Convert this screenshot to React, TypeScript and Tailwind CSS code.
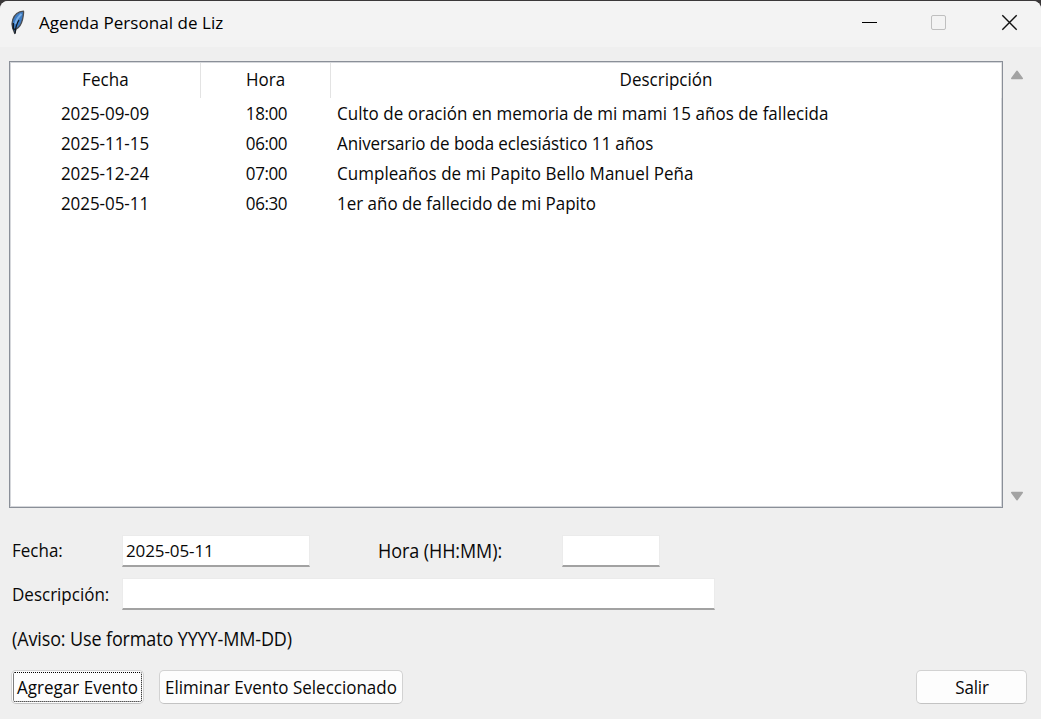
import type { ReactNode } from "react";

type Evento = { fecha: string; hora: string; descripcion: string; tracking: string };

const eventos: Evento[] = [
  {
    fecha: "2025-09-09",
    hora: "18:00",
    descripcion: "Culto de oración en memoria de mi mami 15 años de fallecida",
    tracking: "tracking-[0.02px]",
  },
  {
    fecha: "2025-11-15",
    hora: "06:00",
    descripcion: "Aniversario de boda eclesiástico 11 años",
    tracking: "tracking-[-0.09px]",
  },
  {
    fecha: "2025-12-24",
    hora: "07:00",
    descripcion: "Cumpleaños de mi Papito Bello Manuel Peña",
    tracking: "tracking-[0.04px]",
  },
  {
    fecha: "2025-05-11",
    hora: "06:30",
    descripcion: "1er año de fallecido de mi Papito",
    tracking: "tracking-[-0.02px]",
  },
];

function Label({ children, className = "" }: { children: ReactNode; className?: string }) {
  return <span className={`inline-block scale-y-[1.06] whitespace-nowrap ${className}`}>{children}</span>;
}

function Feather() {
  return (
    <svg viewBox="0 0 16 26" className="h-[26px] w-4">
      <path
        d="M14.500 2.200C10 2.500 5.500 5.500 3.800 10.500C2.900 13 2.800 16.500 3.800 19.500L5.800 24.500L7 20.200C10.500 18.500 12.500 14.500 13.500 10.500C14.300 7 14.800 4.500 14.500 2.200Z"
        fill="#3d7cc4"
        stroke="#4a4d52"
        strokeWidth="1.3"
        strokeLinejoin="round"
      />
      <path d="M12.500 5C9.500 7.500 7.300 11 6.300 15" stroke="#79aee6" strokeWidth="2" fill="none" />
      <path d="M10 11C8 14 6.600 18 6 24.500" stroke="#101820" strokeWidth="1.300" fill="none" />
      <path d="M4.300 14V19L5.500 21" stroke="#101820" strokeWidth="1.500" fill="none" />
    </svg>
  );
}

function TitleBar() {
  return (
    <header className="flex h-[46px] shrink-0 items-center rounded-t-lg bg-[#f3f3f3] pl-[9px]">
      <div className="flex h-full items-start pt-[8px]">
        <Feather />
      </div>
      <span className="mb-[2px] ml-[14px] flex-1 tracking-[0.04px] text-black">Agenda Personal de Liz</span>
      <div className="flex h-[43px] items-center self-start pr-[23px]">
        <button aria-label="Minimizar">
          <svg viewBox="0 0 17 17" className="size-[17px]">
            <path d="M1 8.500H16" stroke="#000" strokeWidth="1" />
          </svg>
        </button>
        <button aria-label="Maximizar" className="ml-[52px]" disabled>
          <svg viewBox="0 0 17 17" className="size-[17px]">
            <rect x="1.500" y="1.500" width="14" height="14" rx="1.500" fill="none" stroke="#bfbfbf" />
          </svg>
        </button>
        <button aria-label="Cerrar" className="ml-[54px]">
          <svg viewBox="0 0 17 17" className="size-[17px]">
            <path d="M1.300 1.300L15.700 15.700M15.700 1.300L1.300 15.700" stroke="#111" strokeWidth="1.400" />
          </svg>
        </button>
      </div>
    </header>
  );
}

function Arrow({ down = false }: { down?: boolean }) {
  return (
    <svg viewBox="0 0 14 10" className={`h-[10px] w-[14px] ${down ? "rotate-180" : ""}`}>
      <path d="M7 1.200L12.300 8.500H1.700Z" fill="#a3a3a3" stroke="#a3a3a3" strokeWidth="1.400" strokeLinejoin="round" />
    </svg>
  );
}

function Tabla() {
  return (
    <div className="flex h-[447px] shrink-0">
      <div className="w-[994px] border border-[#8a8f98] bg-white shadow-[inset_0_0_0_1px_#d5d7db]">
        <div className="flex h-[36px] pt-px text-center leading-[34px]">
          <div className="w-[191px] border-r border-[#e3e3e3] pl-px">
            <Label className="tracking-[0.1px]">Fecha</Label>
          </div>
          <div className="w-[130px] border-r border-[#e3e3e3]">
            <Label>Hora</Label>
          </div>
          <div className="flex-1 border-r border-[#e3e3e3]">
            <Label>Descripción</Label>
          </div>
        </div>
        {eventos.map((e) => (
          <div key={e.fecha} className="flex h-[30px] items-center pt-px text-center">
            <div className="w-[190px]">
              <Label className="tracking-[-0.06px]">{e.fecha}</Label>
            </div>
            <div className="w-[132px] pl-px">
              <Label className="tracking-[-0.4px]">{e.hora}</Label>
            </div>
            <div className="flex-1 pl-[5px] text-left">
              <Label className={e.tracking}>{e.descripcion}</Label>
            </div>
          </div>
        ))}
      </div>
      <div className="flex flex-1 flex-col items-center justify-between pt-[9px] pr-[11px] pb-[7px]">
        <Arrow />
        <Arrow down />
      </div>
    </div>
  );
}

function Campo({ className, value = "", label }: { className: string; value?: string; label: string }) {
  return (
    <input
      aria-label={label}
      defaultValue={value}
      className={`h-[32px] border border-b-2 border-[#ebebeb] border-b-[#a2a2a2] bg-white px-[3px] tracking-[-0.1px] outline-none ${className}`}
    />
  );
}

function Boton({ children, className }: { children: ReactNode; className: string }) {
  return (
    <button
      className={`flex h-[34px] items-center justify-center rounded-[5px] border border-[#d2d2d2] border-b-[#c3c3c3] bg-[#fdfdfd] ${className}`}
    >
      {children}
    </button>
  );
}

export default function App() {
  return (
    <div className="h-[719px] w-[1041px] overflow-hidden bg-[#3a3839] pt-px font-['Open_Sans','Noto_Sans',sans-serif] text-[17px] leading-6 text-[#080808]">
      <div className="flex h-[718px] flex-col rounded-t-lg bg-[#efefef]">
        <TitleBar />
        <main className="flex flex-col pt-[14px] pl-[9px]">
          <Tabla />
          <div className="mt-[27px] flex h-[32px] items-center pl-[3px]">
            <Label className="w-[110px]">Fecha:</Label>
            <Campo label="Fecha" value="2025-05-11" className="w-[188px]" />
            <Label className="ml-[68px] w-[184px] text-[18px] tracking-[-0.08px]">Hora (HH:MM):</Label>
            <Campo label="Hora" className="w-[98px]" />
          </div>
          <div className="mt-[11px] flex h-[32px] items-center pl-[3px]">
            <Label className="w-[110px] pt-px">Descripción:</Label>
            <Campo label="Descripción" className="w-[593px]" />
          </div>
          <div className="mt-[17px] flex h-6 items-center pl-[3px]">
            <Label className="text-[18px] tracking-[-0.13px]">(Aviso: Use formato YYYY-MM-DD)</Label>
          </div>
          <div className="mt-[19px] flex pr-[14px] pl-[2px]">
            <Boton className="w-[133px] p-px">
              <span className="flex h-full w-full items-center justify-center rounded-[2px] border border-dotted border-black pt-px">
                <Label className="tracking-[0.03px]">Agregar Evento</Label>
              </span>
            </Boton>
            <Boton className="ml-[15px] w-[244px] pt-[2px]">
              <Label>Eliminar Evento Seleccionado</Label>
            </Boton>
            <Boton className="ml-auto w-[111px] pt-[2px] pl-px">
              <Label className="tracking-[-0.2px]">Salir</Label>
            </Boton>
          </div>
        </main>
      </div>
    </div>
  );
}
